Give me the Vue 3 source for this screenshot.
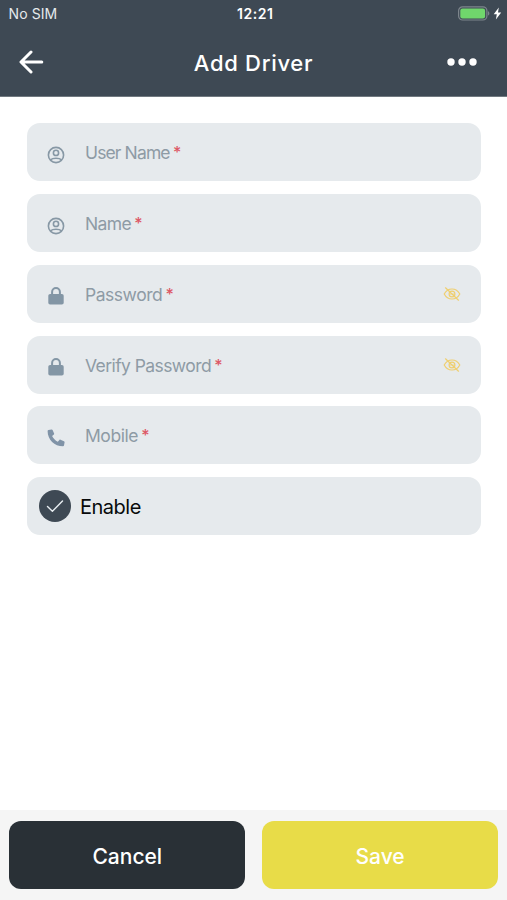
<script setup>
import { ref } from 'vue'

const fields = [
  { label: 'User Name', icon: 'user', tone: 'username' },
  { label: 'Name', icon: 'user', tone: 'name' },
  { label: 'Password', icon: 'lock', tone: 'password', secret: true },
  { label: 'Verify Password', icon: 'lock', tone: 'verify', secret: true },
  { label: 'Mobile', icon: 'phone', tone: 'mobile' },
]
const enabled = ref(true)
</script>

<template>
  <div class="screen">
    <header class="header">
      <div class="status">
        <span class="carrier">No SIM</span>
        <span class="clock">12:21</span>
        <span class="power">
          <svg class="battery" width="32" height="15" viewBox="0 0 32 15">
            <rect x="0.6" y="0.8" width="28.3" height="13.2" rx="4" fill="none" stroke="#7d858c" stroke-width="1.2" />
            <rect x="2.3" y="2.6" width="24.8" height="9.8" rx="2.2" fill="#70d66c" />
            <path d="M30 5.2c1.8.5 1.8 3.9 0 4.4z" fill="#7d858c" />
          </svg>
          <svg width="9" height="13" viewBox="0 0 9 13">
            <path d="M5.8 0.4 0.7 7.2h3.1L2.9 12.4 8.2 5.5H5z" fill="#fff" />
          </svg>
        </span>
      </div>
      <div class="bar">
        <button class="icon-button" aria-label="Back">
          <svg width="26" height="24" viewBox="0 0 26 24" fill="none" stroke="#fff" stroke-width="3" stroke-linecap="round" stroke-linejoin="round">
            <path d="M12 2 2 12l10 10M2.5 12h20.3" />
          </svg>
        </button>
        <h1 class="title">Add Driver</h1>
        <button class="icon-button more" aria-label="More">
          <svg width="30" height="8" viewBox="0 0 30 8" fill="#fff">
            <circle cx="4" cy="4" r="3.7" />
            <circle cx="15" cy="4" r="3.7" />
            <circle cx="26" cy="4" r="3.7" />
          </svg>
        </button>
      </div>
    </header>

    <main class="form">
      <div v-for="field in fields" :key="field.label" class="field">
        <svg v-if="field.icon === 'user'" class="lead" width="18" height="18" viewBox="0 0 18 18" fill="none" stroke="#8798a5" stroke-width="1.6">
          <circle cx="9" cy="9" r="7.6" />
          <circle cx="9" cy="6.9" r="2.6" />
          <path d="M3.4 13.8c1.3-1.1 3.2-1.6 5.6-1.6s4.3.5 5.6 1.6" />
        </svg>
        <svg v-else-if="field.icon === 'lock'" class="lead" width="18" height="18" viewBox="0 0 18 18">
          <path d="M5.1 8V5a3.9 3.9 0 0 1 7.8 0V8" fill="none" stroke="#8396a5" stroke-width="2" />
          <rect x="1.3" y="7" width="15.4" height="10.5" rx="1.8" fill="#8396a5" />
        </svg>
        <svg v-else class="lead" width="18" height="18" viewBox="0 0 18 18">
          <path d="M1.5.9 4.5.4c.5-.1.9.2 1.1.6l1.5 3.5c.2.4.1.8-.2 1.1L5.1 7.1c1.2 2.5 3.2 4.5 5.7 5.7l1.6-1.9c.3-.3.7-.4 1.1-.2l3.5 1.5c.4.2.7.6.6 1.1l-.6 3.2c-.1.5-.5.8-1 .8C7.5 17.3.6 10.5.6 1.9c0-.5.4-.9.9-1z" fill="#8093a7" />
        </svg>
        <label class="label"><span :class="field.tone">{{ field.label }}</span><b class="star">*</b></label>
        <svg v-if="field.secret" class="eye" width="18" height="14" viewBox="0 0 18 14" fill="none" stroke="#efcf70" stroke-width="1.2" stroke-linecap="round">
          <path d="M1.2 7c2-3.7 4.5-5 7.8-5s5.8 1.3 7.8 5c-2 3.7-4.5 5-7.8 5S3.2 10.7 1.2 7z" />
          <circle cx="9" cy="7" r="2.9" />
          <path d="M2.5.8 15.5 13.2M7.7 7h2.6" />
        </svg>
      </div>
      <div class="field toggle" @click="enabled = !enabled">
        <span class="check">
          <svg v-if="enabled" width="18" height="14" viewBox="0 0 18 14" fill="none" stroke="#e8eef2" stroke-width="1.4" stroke-linecap="round" stroke-linejoin="round">
            <path d="M1.5 7.5 6.4 12.3 16.5 2" />
          </svg>
        </span>
        <span class="enable">Enable</span>
      </div>
    </main>

    <footer class="footer">
      <button class="action cancel"><span>Cancel</span></button>
      <button class="action save"><span>Save</span></button>
    </footer>
  </div>
</template>

<style>
body {
  margin: 0;
}
</style>

<style scoped>
.screen {
  display: flex;
  flex-direction: column;
  height: 100vh;
  overflow: hidden;
  background: #fff;
  font-family: Inter, "Liberation Sans", sans-serif;
}
button {
  border: 0;
  padding: 0;
  background: none;
  font-family: inherit;
}
svg {
  display: block;
  flex: none;
}
.header {
  box-sizing: border-box;
  height: 97px;
  flex: none;
  background: #3e4954;
  border-bottom: 1px solid #717980;
  color: #fff;
}
.status {
  display: grid;
  grid-template-columns: 1fr auto 1fr;
  align-items: center;
  height: 27px;
  padding: 0 5px 0 8.5px;
}
.carrier {
  font-size: 14px;
  letter-spacing: 0.1px;
  color: #e5e9ec;
}
.clock {
  font-size: 14px;
  font-weight: 600;
  letter-spacing: 0.6px;
}
.power {
  display: flex;
  justify-content: flex-end;
  align-items: center;
  gap: 3px;
}
.bar {
  display: grid;
  grid-template-columns: 1fr auto 1fr;
  align-items: center;
  height: 69px;
  padding: 0 19px;
}
.more {
  justify-self: end;
  margin-right: 11px;
}
.title {
  margin: 2px 0 0;
  font-size: 22px;
  line-height: 28px;
  font-weight: 500;
  letter-spacing: 0.7px;
}
.form {
  flex: 1;
  display: flex;
  flex-direction: column;
  gap: 12.8px;
  padding: 26.3px 26px 0 26.5px;
}
.field {
  box-sizing: border-box;
  display: flex;
  align-items: center;
  height: 58px;
  flex: none;
  padding: 0 20px;
  border-radius: 13px;
  background: #e6eaed;
}
.lead {
  margin: 5px 20px 0 0.5px;
}
.label {
  display: flex;
  flex: 1;
  padding-top: 2px;
  font-size: 17.5px;
  line-height: 24px;
  color: #8e9ba5;
  white-space: nowrap;
}
.username {
  letter-spacing: -0.87px;
}
.name {
  letter-spacing: -0.65px;
}
.password {
  letter-spacing: -0.47px;
}
.verify {
  letter-spacing: -0.58px;
}
.mobile {
  letter-spacing: -0.45px;
}
.star {
  margin-left: 3.2px;
  font-size: 16px;
  line-height: 22px;
  font-weight: 500;
  color: #dd5865;
}
.toggle {
  padding: 0 12px;
}
.check {
  display: flex;
  align-items: center;
  justify-content: center;
  width: 32px;
  height: 32px;
  border-radius: 50%;
  background: #3e4954;
}
.enable {
  margin-left: 9.5px;
  padding-top: 1px;
  font-size: 20px;
  line-height: 26px;
  letter-spacing: -0.5px;
  color: #080a0b;
}
.footer {
  box-sizing: border-box;
  display: flex;
  gap: 17px;
  height: 90px;
  flex: none;
  padding: 10.5px 9px 11px 9.4px;
  background: #f5f5f5;
}
.action {
  flex: 1;
  border-radius: 12px;
  color: #fff;
  font-size: 21px;
  font-weight: 500;
}
.action span {
  display: block;
  padding-top: 3px;
}
.cancel {
  background: #293036;
}
.save {
  background: #e8dc48;
}
</style>
